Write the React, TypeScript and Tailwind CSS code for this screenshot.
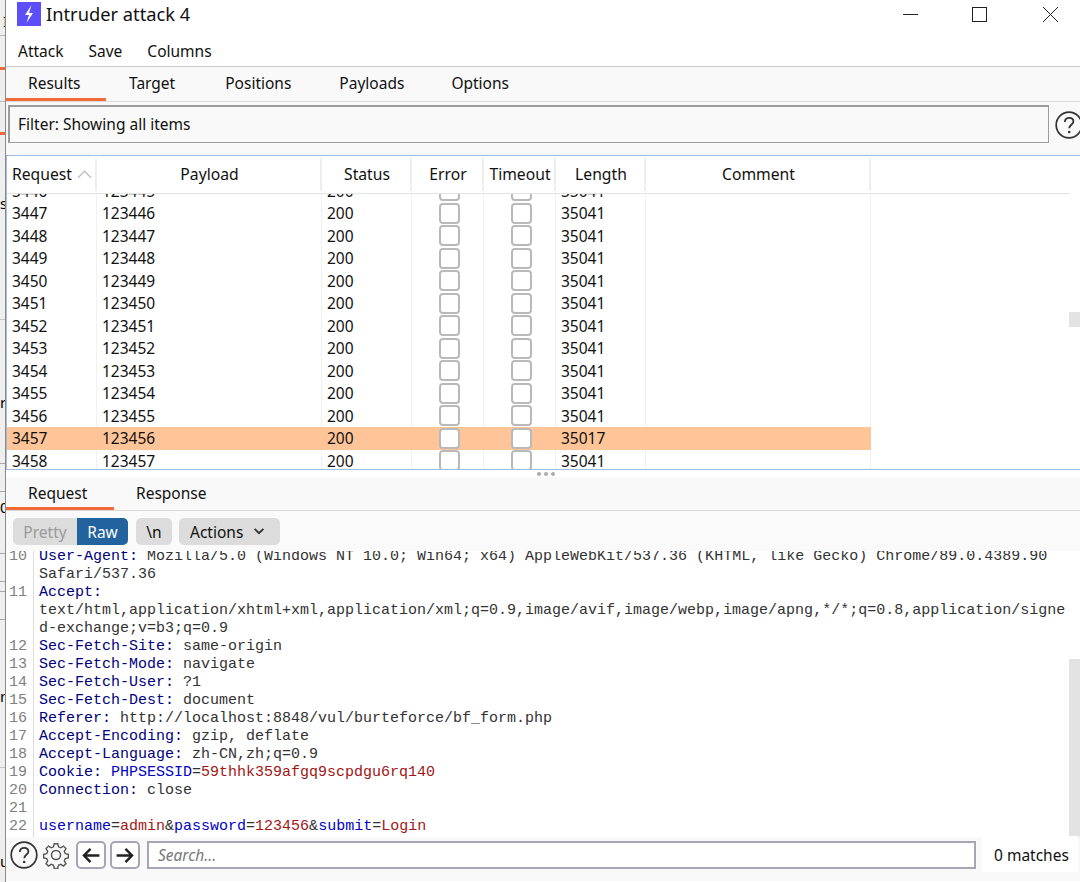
const uiFont = { fontFamily: '"Noto Sans", "Open Sans", sans-serif' };

const columns = [
  { name: "Request", width: "w-[90px]" },
  { name: "Payload", width: "w-[225px]" },
  { name: "Status", width: "w-[90px]" },
  { name: "Error", width: "w-[72px]" },
  { name: "Timeout", width: "w-[72px]" },
  { name: "Length", width: "w-[90px]" },
  { name: "Comment", width: "w-[225px]" },
];

const rows = Array.from({ length: 13 }, (_, i) => ({
  request: 3446 + i,
  payload: 123445 + i,
  length: 3446 + i === 3457 ? 35017 : 35041,
}));

const K = "text-[#000080]";
const V = "text-[#333333]";
const B = "text-[#0000c8]";
const R = "text-[#a31515]";

type Seg = [string, string];
const lines: { n?: number; segs: Seg[] }[] = [
  { n: 10, segs: [[K, "User-Agent:"], [V, " Mozilla/5.0 (Windows NT 10.0; Win64; x64) AppleWebKit/537.36 (KHTML, like Gecko) Chrome/89.0.4389.90"]] },
  { segs: [[V, "Safari/537.36"]] },
  { n: 11, segs: [[K, "Accept:"]] },
  { segs: [[V, "text/html,application/xhtml+xml,application/xml;q=0.9,image/avif,image/webp,image/apng,*/*;q=0.8,application/signe"]] },
  { segs: [[V, "d-exchange;v=b3;q=0.9"]] },
  { n: 12, segs: [[K, "Sec-Fetch-Site:"], [V, " same-origin"]] },
  { n: 13, segs: [[K, "Sec-Fetch-Mode:"], [V, " navigate"]] },
  { n: 14, segs: [[K, "Sec-Fetch-User:"], [V, " ?1"]] },
  { n: 15, segs: [[K, "Sec-Fetch-Dest:"], [V, " document"]] },
  { n: 16, segs: [[K, "Referer:"], [V, " http://localhost:8848/vul/burteforce/bf_form.php"]] },
  { n: 17, segs: [[K, "Accept-Encoding:"], [V, " gzip, deflate"]] },
  { n: 18, segs: [[K, "Accept-Language:"], [V, " zh-CN,zh;q=0.9"]] },
  { n: 19, segs: [[K, "Cookie:"], [V, " "], [B, "PHPSESSID"], [V, "="], [R, "59thhk359afgq9scpdgu6rq140"]] },
  { n: 20, segs: [[K, "Connection:"], [V, " close"]] },
  { n: 21, segs: [] },
  { n: 22, segs: [[B, "username"], [V, "="], [R, "admin"], [V, "&"], [B, "password"], [V, "="], [R, "123456"], [V, "&"], [B, "submit"], [V, "="], [R, "Login"]] },
];

const HelpIcon = ({ className }: { className: string }) => (
  <svg viewBox="0 0 28 28" className={className} fill="none">
    <circle cx="14" cy="14" r="12.8" stroke="#333" strokeWidth="1.7" />
    <path d="M9.8 11c.2-2.800 2-4.200 4.400-4.200 2.500 0 4.200 1.500 4.200 3.600 0 3.200-4.200 3.400-4.200 6.800" stroke="#333" strokeWidth="1.8" />
    <circle cx="14.2" cy="21" r="1.3" fill="#333" />
  </svg>
);

const Checkbox = () => (
  <span className="block h-[21px] w-[21px] shrink-0 rounded-[4px] border-2 border-[#b9b9b9] bg-white" />
);

const BackgroundStrip = () => (
  <div className="flex h-full w-[6px] shrink-0 flex-col overflow-hidden border-r border-[#8a8a8a] bg-[#efefef] text-[15px] leading-[18px] text-black">
    <div className="h-[12px]" />
    <div className="h-[18px] pl-[3px]">I</div>
    <div className="h-[6px] border-b border-[#b8b8b8]" />
    <div className="h-[31px]" />
    <div className="h-[3px] bg-[#f26a35]" />
    <div className="h-[32px] border-b border-[#b8b8b8]" />
    <div className="h-[30px]" />
    <div className="h-[3px] bg-[#f26a35]" />
    <div className="h-[59px]" />
    <div className="h-[18px]">s</div>
    <div className="h-[108px] border-b border-[#c4c4c4]" />
    <div className="h-[73px]" />
    <div className="h-[18px]">r</div>
    <div className="h-[53px] border-b border-[#a8a8a8]" />
    <div className="h-[28px] border-b border-[#a8a8a8]" />
    <div className="h-[6px]" />
    <div className="h-[18px]">0</div>
    <div className="h-[38px] border-b border-[#a8a8a8]" />
    <div className="h-[28px] border-b border-[#a8a8a8]" />
    <div className="h-[10px] border-b border-[#a8a8a8]" />
    <div className="h-[28px] border-b border-[#a8a8a8]" />
    <div className="h-[67px]" />
    <div className="h-[18px]">n</div>
    <div className="h-[63px] border-b border-[#c4c4c4]" />
    <div className="h-[84px]" />
    <div className="h-[18px]">u</div>
  </div>
);

const ResultsTable = () => (
  <div className="h-[315px] shrink-0 overflow-hidden border-y border-l border-[#9dbde3] bg-white">
    <div className="flex h-[38px] w-[1063px] items-start border-b border-[#e4e4e4] text-[15.7px] text-[#111]">
      {columns.map((col) => (
        <div
          key={col.name}
          className={`${col.width} mt-[2px] flex h-[33px] shrink-0 items-center border-r-2 border-[#eeeeee] ${col.name === "Request" ? "justify-start pl-[5px]" : "justify-center pl-[2px]"}`}
        >
          {col.name}
          {col.name === "Request" && (
            <svg viewBox="0 0 16 9" className="ml-[5px] h-[9px] w-[15px]" fill="none">
              <path d="M1 8 8 1l7 7" stroke="#c4c4c4" strokeWidth="1.6" />
            </svg>
          )}
        </div>
      ))}
    </div>
    <div className="h-[275px] overflow-hidden">
      <div className="-mt-[14.5px]">
        {rows.map((row) => {
          const hit = row.request === 3457;
          const cell = `h-full shrink-0 border-r ${hit ? "border-transparent" : "border-[#f1f1f1]"}`;
          return (
            <div key={row.request} className={`flex h-[22.5px] w-[864px] items-center text-[15.5px] leading-[22px] text-[#111] ${hit ? "bg-[#ffc599]" : ""}`}>
              <div className={`w-[90px] pl-[5px] ${cell}`}>{row.request}</div>
              <div className={`w-[225px] pl-[5px] ${cell}`}>{row.payload}</div>
              <div className={`w-[90px] pl-[5px] ${cell}`}>200</div>
              <div className={`flex w-[72px] items-center justify-center pl-[4px] ${cell}`}><Checkbox /></div>
              <div className={`flex w-[72px] items-center justify-center pl-[4px] ${cell}`}><Checkbox /></div>
              <div className={`w-[90px] pl-[5px] ${cell}`}>{row.length}</div>
              <div className={`w-[225px] ${cell}`} />
            </div>
          );
        })}
      </div>
    </div>
  </div>
);

const ScrollTrack = ({ top, height }: { top: string; height: string }) => (
  <div className="flex w-[11px] shrink-0 flex-col">
    <div className={top} />
    <div className={`${height} bg-[#e3e3e3]`} />
  </div>
);

export default function App() {
  return (
    <div className="flex h-[882px] w-[1080px] overflow-hidden bg-white" style={uiFont}>
      <BackgroundStrip />
      <div className="flex h-full min-w-0 flex-1 flex-col">
        {/* title bar */}
        <div className="flex h-[28px] shrink-0 items-center pl-[11px] pr-[22px]">
          <svg viewBox="0 0 24 24" className="h-[24px] w-[24px]">
            <rect width="24" height="24" fill="#5d4dfb" />
            <path d="M14.5 3 8 13h4l-2.500 8L16 11h-4z" fill="#ffffff" />
          </svg>
          <span className="ml-[5px] text-[18.3px] leading-[28px] text-[#111]">Intruder attack 4</span>
          <svg viewBox="0 0 155 15" className="ml-auto h-[15px] w-[155px]" fill="none" stroke="#222" strokeWidth="1">
            <path d="M0 7.500h15" />
            <rect x="69.5" y=".5" width="14" height="14" />
            <path d="m140 0 15 15m0-15-15 15" />
          </svg>
        </div>

        {/* menu bar */}
        <div className="flex h-[39px] shrink-0 items-center gap-[25px] border-b border-[#cccccc] pl-[12px] pt-[10px] text-[15.5px] text-[#111]">
          <span>Attack</span>
          <span>Save</span>
          <span>Columns</span>
        </div>

        {/* main tabs */}
        <div className="flex h-[35px] shrink-0 border-b border-[#dddddd] bg-[#f9f9f9] text-[15.5px] text-[#111]">
          <div className="flex h-[34px] w-[100px] items-center border-b-[3px] border-[#f26a35] pl-[22px] pt-[3px]">Results</div>
          <div className="flex h-[34px] items-center border-b-[3px] border-transparent pl-[23px] pr-[26px] pt-[3px]">Target</div>
          <div className="flex h-[34px] items-center border-b-[3px] border-transparent px-[24px] pt-[3px]">Positions</div>
          <div className="flex h-[34px] items-center border-b-[3px] border-transparent pl-[24px] pr-[23px] pt-[3px]">Payloads</div>
          <div className="flex h-[34px] items-center border-b-[3px] border-transparent px-[24px] pt-[3px]">Options</div>
        </div>

        {/* filter */}
        <div className="flex h-[53px] shrink-0 items-start bg-[#f9f9f9] pl-[2px] pt-[3px]">
          <div className="flex h-[38px] w-[1044px] items-center border-2 border-b-[1px] border-r-[1px] border-[#9c9c9c] bg-[#f9f9f9] pl-[8px] text-[15.5px] text-[#111]">
            Filter: Showing all items
          </div>
          <HelpIcon className="ml-[3px] mt-[6px] h-[28px] w-[28px] shrink-0 translate-x-[3px]" />
        </div>

        <div className="relative">
          <ResultsTable />
          <div className="absolute right-0 top-[157px]">
            <ScrollTrack top="h-0" height="h-[15px]" />
          </div>
        </div>

        {/* split handle */}
        <div className="flex h-[7px] shrink-0 items-center justify-center gap-[3px] bg-white pl-[6px]">
          <span className="h-[4px] w-[4px] rounded-full bg-[#ababab]" />
          <span className="h-[4px] w-[4px] rounded-full bg-[#ababab]" />
          <span className="h-[4px] w-[4px] rounded-full bg-[#ababab]" />
        </div>

        {/* request / response tabs */}
        <div className="flex h-[34px] shrink-0 border-b border-[#d8d8d8] bg-[#f9f9f9] text-[15.5px] text-[#111]">
          <div className="flex h-[33px] w-[108px] items-center border-b-[3px] border-[#f26a35] pl-[22px] pt-[3px]">Request</div>
          <div className="flex h-[33px] items-center border-b-[3px] border-transparent pl-[22px] pt-[3px]">Response</div>
        </div>

        {/* message toolbar */}
        <div className="flex h-[40px] shrink-0 items-start bg-[#fafafa] pl-[7px] pt-[7px] text-[15.5px] leading-[28px]">
          <div className="flex h-[27px] overflow-hidden rounded-[5px]">
            <span className="w-[64px] bg-[#dcdcdc] text-center text-[#9a9a9a]">Pretty</span>
            <span className="w-[51px] bg-[#22629e] text-center text-white">Raw</span>
          </div>
          <span className="ml-[8px] h-[27px] w-[36px] rounded-[5px] bg-[#dcdcdc] text-center text-[#111]">\n</span>
          <span className="ml-[7px] flex h-[27px] w-[101px] items-center rounded-[5px] bg-[#dcdcdc] pl-[11px] text-[#111]">
            Actions
            <svg viewBox="0 0 12 8" className="ml-[10px] h-[7px] w-[12px]" fill="none">
              <path d="m1 1 5 5 5-5" stroke="#333" strokeWidth="2.2" />
            </svg>
          </span>
        </div>

        {/* message editor */}
        <div className="flex h-[286px] shrink-0 overflow-hidden bg-white">
          <div className="min-w-0 flex-1 overflow-hidden">
            <div className="-mt-[3px]" style={{ fontFamily: '"Liberation Mono", monospace' }}>
              {lines.map((line, i) => (
                <div key={i} className="flex h-[18px] text-[15px] leading-[18px]">
                  <span className="w-[28px] shrink-0 border-r border-[#dddddd] pr-[6px] text-right text-[#808080]">{line.n}</span>
                  <span className="whitespace-pre pl-[5px]">
                    {line.segs.map(([color, text], j) => (
                      <span key={j} className={color}>{text}</span>
                    ))}
                  </span>
                </div>
              ))}
              <div className="h-[10px] w-[28px] border-r border-[#dddddd]" />
            </div>
          </div>
          <ScrollTrack top="h-[108px]" height="h-[178px]" />
        </div>

        {/* search bar */}
        <div className="flex h-[44px] shrink-0 items-start bg-[#f9f9f9] pl-[4px] pt-[4px]">
          <HelpIcon className="h-[28px] w-[28px] shrink-0" />
          <svg viewBox="0 0 28 28" className="ml-[4px] h-[28px] w-[28px] shrink-0" fill="none" stroke="#555" strokeWidth="1.5">
            <circle cx="14" cy="14" r="4.5" />
            <path d="M12 1.500h4l.7 3.400 2.600 1.100 3-1.900 2.800 2.800-1.900 3 1.100 2.600 3.400.7v4l-3.400.7-1.100 2.600 1.900 3-2.800 2.800-3-1.900-2.600 1.100-.7 3.400h-4l-.7-3.400-2.600-1.100-3 1.900-2.800-2.800 1.900-3-1.100-2.600-3.400-.7v-4l3.400-.7 1.100-2.600-1.900-3 2.800-2.800 3 1.900 2.600-1.100z" transform="translate(1.4 1.4) scale(.9)" />
          </svg>
          <button className="ml-[6px] flex h-[28px] w-[30px] shrink-0 items-center justify-center rounded-[5px] border-2 border-[#a5a5b5] bg-white">
            <svg viewBox="0 0 18 16" className="h-[15px] w-[18px]" fill="none" stroke="#222" strokeWidth="2.6">
              <path d="M18 8H2m6.500-7L1.500 8l7 7" />
            </svg>
          </button>
          <button className="ml-[4px] flex h-[28px] w-[30px] shrink-0 items-center justify-center rounded-[5px] border-2 border-[#a5a5b5] bg-white">
            <svg viewBox="0 0 18 16" className="h-[15px] w-[18px]" fill="none" stroke="#222" strokeWidth="2.6">
              <path d="M0 8h16M9.500 1l7 7-7 7" />
            </svg>
          </button>
          <div className="ml-[7px] flex h-[28px] w-[829px] shrink-0 items-center border-2 border-[#a5a5b5] bg-white pl-[9px] pt-[1px] text-[15.5px] italic text-[#777777]">
            Search...
          </div>
          <div className="-mt-[5px] ml-[6px] flex h-[36px] w-[96px] shrink-0 items-center bg-white pl-[12px] pt-[4px] text-[15.5px] text-[#111]">
            0 matches
          </div>
        </div>
      </div>
    </div>
  );
}
